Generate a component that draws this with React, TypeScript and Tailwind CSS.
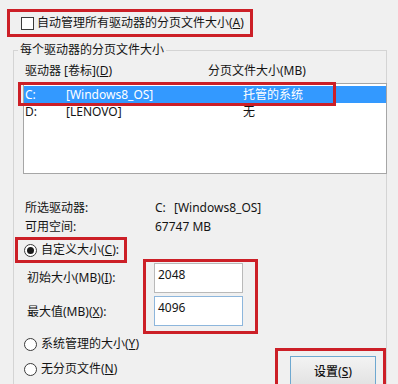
import React from 'react';

function Radio({ checked }: { checked?: boolean }) {
  return (
    <span className="flex h-[13px] w-[13px] shrink-0 items-center justify-center rounded-full border border-[#3a3a3a] bg-white">
      {checked && <span className="h-[7px] w-[7px] rounded-full bg-[#1a1a1a]" />}
    </span>
  );
}

export default function App() {
  return (
    <div className="relative h-[384px] w-[398px] overflow-hidden bg-[#f0f0f0] font-['Noto_Sans','Noto_Sans_CJK_SC',sans-serif] text-[12px] leading-[16px] text-[#141414]">
      {/* auto manage checkbox */}
      <div className="ml-[7px] mt-[9px] flex h-[28px] w-[246px] items-center border-[3px] border-[#cc1f27] pl-[11px]">
        <span className="h-[13px] w-[13px] shrink-0 border border-[#3a3a3a] bg-white" />
        <span className="ml-[3px] whitespace-nowrap">
          自动管理所有驱动器的分页文件大小(<u>A</u>)
        </span>
      </div>

      {/* group box */}
      <div className="ml-[13px] mt-[13px] w-[374px] border border-b-0 border-[#d4d4d4]">
        <div className="-mt-[8px] ml-[4px] w-fit bg-[#f0f0f0] px-[2px] leading-[14px]">
          每个驱动器的分页文件大小
        </div>

        <div className="mt-[7px] flex h-[14px] pl-[11px] leading-[14px]">
          <span className="w-[183px]">
            驱动器 [卷标](<u>D</u>)
          </span>
          <span>分页文件大小(MB)</span>
        </div>

        <div className="relative ml-[9px] mt-[5px] h-[91px] w-[364px] border border-[#a6a6a6] bg-white pt-[2px]">
          <div className="flex h-[17px] items-center bg-[#3399ff] pl-[1px] text-white">
            <span className="w-[41px]">C:</span>
            <span className="w-[177px]">[Windows8_OS]</span>
            <span>托管的系统</span>
          </div>
          <div className="flex h-[18px] items-center pl-[1px]">
            <span className="w-[41px]">D:</span>
            <span className="w-[177px]">[LENOVO]</span>
            <span>无</span>
          </div>
          <div className="absolute left-[-6px] top-[-2px] h-[24px] w-[318px] border-[3px] border-[#cc1f27]" />
        </div>

        <div className="mt-[26px] flex h-[16px] pl-[11px]">
          <span className="w-[130px]">所选驱动器:</span>
          <span className="w-[19px]">C:</span>
          <span>[Windows8_OS]</span>
        </div>
        <div className="mt-[3px] flex h-[16px] pl-[11px]">
          <span className="w-[130px]">可用空间:</span>
          <span>67747 MB</span>
        </div>

        <div className="ml-[1px] mt-[2px] flex h-[26px] w-[112px] items-center border-[3px] border-[#cc1f27] pl-[6px]">
          <Radio checked />
          <span className="ml-[4px] whitespace-nowrap">
            自定义大小(<u>C</u>):
          </span>
        </div>

        <div className="flex">
          <div className="w-[129px] pl-[13px]">
            <div className="mt-[7px] h-[16px] whitespace-nowrap">
              初始大小(MB)(<u>I</u>):
            </div>
            <div className="mt-[18px] h-[16px] whitespace-nowrap">
              最大值(MB)(<u>X</u>):
            </div>
          </div>
          <div className="-mt-[4px] h-[75px] w-[115px] border-[3px] border-[#cc1f27] pl-[8px] pt-[1px]">
            <div className="h-[30px] w-[89px] border border-[#b9b9b9] bg-white px-[3px] pt-[3px]">2048</div>
            <div className="mt-[3px] h-[30px] w-[89px] border border-[#8db6dc] bg-white px-[3px] pt-[3px]">4096</div>
          </div>
        </div>

        <div className="flex">
          <div className="w-[263px] pl-[10px]">
            <div className="mt-[1px] flex h-[18px] items-center">
              <Radio />
              <span className="ml-[4px]">
                系统管理的大小(<u>Y</u>)
              </span>
            </div>
            <div className="mt-[7px] flex h-[18px] items-center">
              <Radio />
              <span className="ml-[4px]">
                无分页文件(<u>N</u>)
              </span>
            </div>
          </div>
          <div className="mt-[14px] h-[42px] w-[111px] shrink-0 border-[3px] border-[#cc1f27]">
            <div className="ml-[12px] mt-[5px] flex h-[32px] w-[86px] items-center justify-center border border-[#6ea8d0] bg-gradient-to-b from-[#f3f3f3] to-[#e1e1e1] font-medium">
              设置(<u>S</u>)
            </div>
          </div>
        </div>
      </div>
    </div>
  );
}
